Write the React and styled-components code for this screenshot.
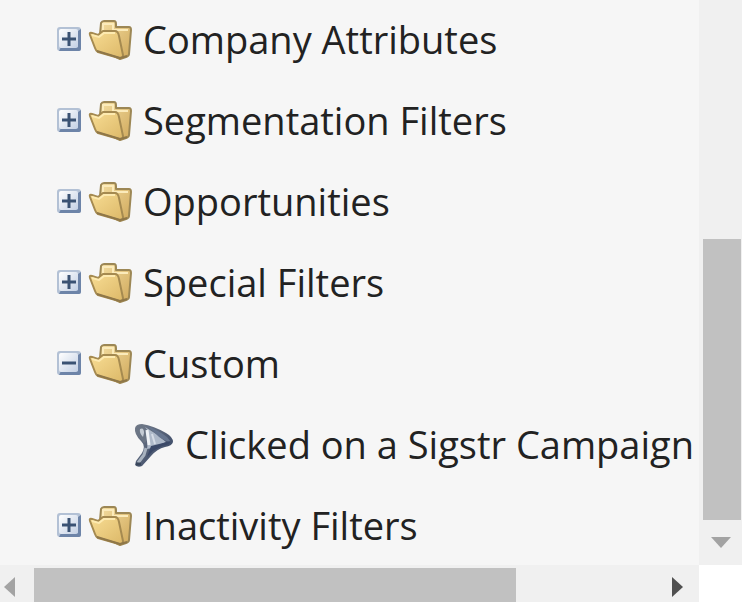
import React, { useState } from 'react';
import styled, { createGlobalStyle } from 'styled-components';

const GlobalStyle = createGlobalStyle`
  * {
    box-sizing: border-box;
  }
  body {
    margin: 0;
    background: #ffffff;
    color: #222222;
    font-family: 'Open Sans', 'Noto Sans', sans-serif;
    overflow: hidden;
  }
`

const Panel = styled.div`
  display: grid;
  grid-template-columns: minmax(0, 1fr) 43px;
  grid-template-rows: auto 37px;
`

const Tree = styled.ul`
  display: flex;
  flex-direction: column;
  gap: 9px;
  margin: 0;
  padding: 4px 0 3px;
  list-style: none;
  background: #f6f6f6;
  overflow: hidden;
`

const Row = styled.li`
  display: flex;
  align-items: center;
  height: 72px;
  padding-left: ${ props => props.$nested ? '133px' : '56px' };
  font-size: 38px;
  line-height: 54px;
  white-space: nowrap;
`

const Toggle = styled.button`
  display: flex;
  width: 26px;
  height: 26px;
  margin: 0 6px 2px 0;
  padding: 0;
  border: 0;
  background: none;
  cursor: pointer;
`

const Label = styled.span`
  margin-left: 10px;
  padding-bottom: 2px;
`

const Drawing = styled.svg`
  display: block;
  flex: none;
`

const Bar = styled.div`
  display: flex;
  flex-direction: ${ props => props.$vertical ? 'column' : 'row' };
  background: #f0f0f0;
`

const Track = styled.div`
  display: flex;
  flex: 1;
  flex-direction: inherit;
  padding: ${ props => props.$vertical ? '0 1px 0 4px' : '3px 0 0' };
`

const Space = styled.div`
  flex: ${ props => props.$size } 0 0;
`

const Thumb = styled.div`
  flex: ${ props => props.$size } 0 0;
  background: #c1c1c1;
`

const Arrow = styled.button`
  display: flex;
  align-items: center;
  justify-content: ${ props => props.$start ? 'flex-start' : 'center' };
  width: ${ props => props.$width };
  height: ${ props => props.$height };
  padding: ${ props => props.$padding || 0 };
  border: 0;
  background: none;
  color: ${ props => props.$active ? '#505050' : '#a3a3a3' };
`

const folders = [
  { name: 'Company Attributes' },
  { name: 'Segmentation Filters' },
  { name: 'Opportunities' },
  { name: 'Special Filters' },
  { name: 'Custom', items: [ 'Clicked on a Sigstr Campaign' ] },
  { name: 'Inactivity Filters' },
]

function ToggleIcon({ open }) {
  return (
    <Drawing width="26" height="26" viewBox="0 0 26 26" aria-hidden="true">
      <rect x="1" y="1" width="24" height="24" rx="3" fill="#b3c1d5" />
      <path d="M3 25H23Q25 25 25 23V3L22 5V21H5Z" fill="#6d84a8" />
      <rect x="3" y="3" width="19" height="19" rx="2" fill="url(#toggleFace)" />
      <path d="M6 13H20" stroke="#3a5273" strokeWidth="3" />
      { !open && <path d="M13 6V20" stroke="#3a5273" strokeWidth="3" /> }
    </Drawing>
  )
}

function FolderIcon() {
  return (
    <Drawing width="45" height="42" viewBox="0 0 45 42" aria-hidden="true">
      <path
        d="M12 15L13 4Q14 2 16 2H26Q28 2 28 5V8H41Q43 8 43 11L41 35Q41 37 38 38L32 40L12 30Z"
        fill="url(#folderBack)" stroke="#9c8755" strokeWidth="2" strokeLinejoin="round"
      />
      <path d="M15 13V5H25V11H40" fill="none" stroke="#fbebbb" strokeWidth="2" />
      <path
        d="M2 16Q1 13 4 14L10 16L15 12H27Q30 12 31 17L35 36Q35 40 31 39L10 33Q8 32 7 29Z"
        fill="url(#folderFront)" stroke="#a58a50" strokeWidth="2" strokeLinejoin="round"
      />
      <path d="M4 16L11 18L16 14H27" fill="none" stroke="#fdeab0" strokeWidth="2" />
      <path d="M9 32L32 39L39 37" fill="none" stroke="#8f7748" strokeWidth="2" />
    </Drawing>
  )
}

function FilterIcon() {
  return (
    <Drawing width="42" height="45" viewBox="0 0 42 45" aria-hidden="true">
      <path
        d="M2 5Q3 1 9 1Q21 3 33 10Q40 14 40 19Q39 23 32 24Q24 26 18 33L9 43Q5 45 2 42L3 38L9 30Q13 23 8 18Q1 11 2 5Z"
        fill="url(#funnelBody)"
      />
      <path d="M3 6Q3 2 9 2L12 5Q16 12 13 19L11 20Q4 12 3 6Z" fill="#6b7585" />
      <path d="M7 6Q11 4 11 10L10 14Q6 10 7 6Z" fill="#c4cbd4" />
      <path d="M12 4Q17 9 15 18L14 26L19 25L33 19Q23 10 12 4Z" fill="#aeb9c9" />
      <path d="M14 7L16 22" stroke="#eff2f6" strokeWidth="3" />
      <path d="M19 11L22 21" stroke="#d5dce6" strokeWidth="2" />
      <path d="M14 3Q25 7 34 14L38 19Q29 18 22 10Z" fill="#66758f" />
      <path d="M18 23L38 18Q37 22 29 23L20 28L14 34Z" fill="#3b4968" />
      <path d="M13 25L11 32L5 40" fill="none" stroke="#a8b2bf" strokeWidth="3" />
      <path d="M3 41H8" stroke="#39465b" strokeWidth="3" />
    </Drawing>
  )
}

function Gradients() {
  return (
    <defs>
      <linearGradient id="toggleFace" x1="0" y1="0" x2="1" y2="1">
        <stop offset="0" stopColor="#ffffff" />
        <stop offset="1" stopColor="#c3d0e4" />
      </linearGradient>
      <linearGradient id="folderBack" x1="0" y1="0" x2="1" y2="1">
        <stop offset="0" stopColor="#f3dda0" />
        <stop offset="1" stopColor="#d0a95c" />
      </linearGradient>
      <linearGradient id="folderFront" x1="0" y1="0" x2="1" y2="1">
        <stop offset="0" stopColor="#f8dd94" />
        <stop offset="1" stopColor="#dcb868" />
      </linearGradient>
      <linearGradient id="funnelBody" x1="0" y1="0" x2="1" y2="1">
        <stop offset="0" stopColor="#777f8c" />
        <stop offset="1" stopColor="#2f3f60" />
      </linearGradient>
    </defs>
  )
}

function Folder({ folder }) {
  const [ open, setOpen ] = useState( Boolean( folder.items ) )

  return (
    <>
      <Row>
        <Toggle
          type="button"
          aria-label={ folder.name }
          aria-expanded={ open }
          onClick={ () => setOpen( !open ) }
        >
          <ToggleIcon open={ open } />
        </Toggle>
        <FolderIcon />
        <Label>{ folder.name }</Label>
      </Row>
      { open && folder.items && folder.items.map( item => (
        <Row key={ item } $nested>
          <FilterIcon />
          <Label>{ item }</Label>
        </Row>
      ))}
    </>
  )
}

export default function App() {
  return (
    <>
      <GlobalStyle />
      <Panel>
        <Tree>
          { folders.map( folder => <Folder key={ folder.name } folder={ folder } /> ) }
        </Tree>
        <Bar $vertical>
          <Track $vertical>
            <Space $size={239} />
            <Thumb $size={281} />
          </Track>
          <Arrow type="button" aria-label="Scroll down" $width="43px" $height="45px">
            <Drawing width="20" height="11"><path d="M0 0H20L10 11Z" fill="currentColor" /></Drawing>
          </Arrow>
        </Bar>
        <Bar>
          <Arrow type="button" aria-label="Scroll left" $width="34px" $height="37px" $padding="7px 0 0 4px" $start>
            <Drawing width="11" height="20"><path d="M11 0V20L0 10Z" fill="currentColor" /></Drawing>
          </Arrow>
          <Track>
            <Thumb $size={482} />
            <Space $size={138} />
          </Track>
          <Arrow type="button" aria-label="Scroll right" $width="45px" $height="37px" $padding="7px 0 0 2px" $active>
            <Drawing width="11" height="20"><path d="M0 0V20L11 10Z" fill="currentColor" /></Drawing>
          </Arrow>
        </Bar>
      </Panel>
      <Drawing width="0" height="0" aria-hidden="true"><Gradients /></Drawing>
    </>
  )
}
